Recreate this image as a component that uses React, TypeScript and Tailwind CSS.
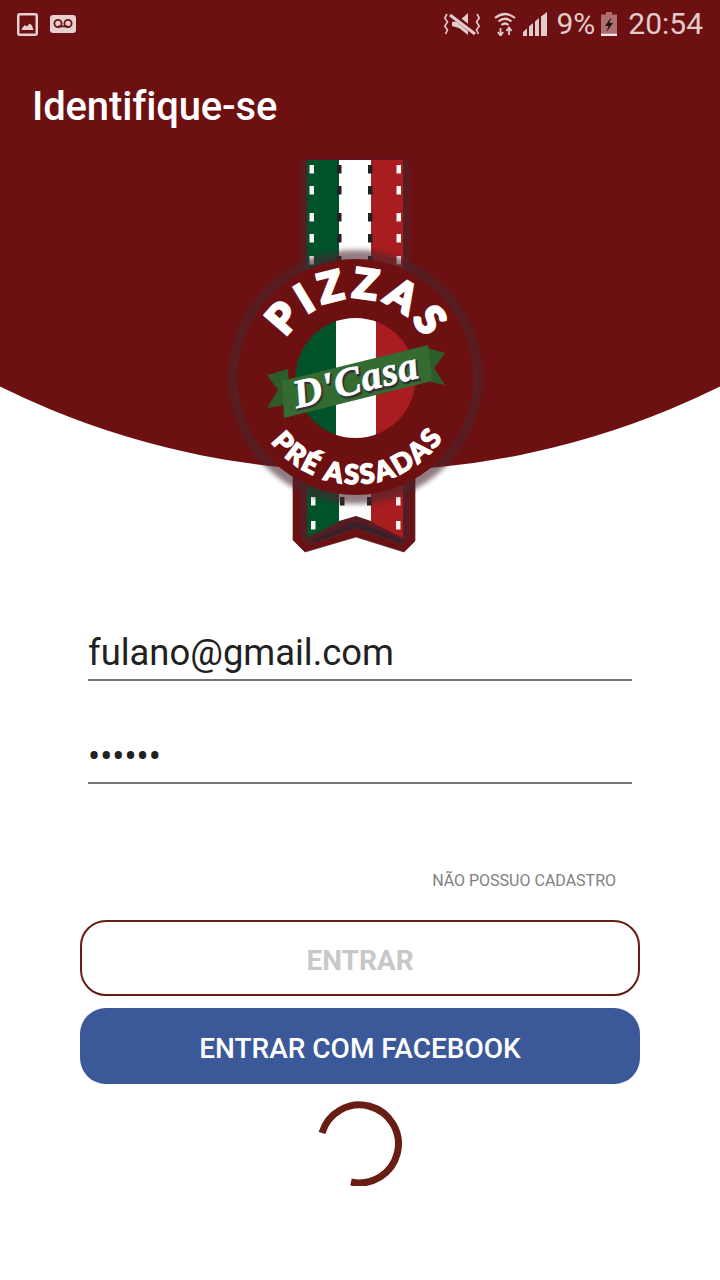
import React from 'react';

const BRAND = '#6d1012';

function LeftStatusIcons() {
  return (
    <div className="flex items-center gap-3">
      <svg width="21" height="23" viewBox="0 0 21 23">
        <rect x="1.25" y="1.25" width="18.5" height="20.5" rx="1.5" fill="#6d1012" stroke="#e6d0d0" strokeWidth="2.5" />
        <path d="M4.5 17 L5.5 14.5 L8 12 L10 13.5 L12.5 10.5 L15 12.5 L16.5 17 Z" fill="#e6d0d0" />
      </svg>
      <svg width="26" height="18" viewBox="0 0 26 18">
        <rect width="26" height="18" rx="3" fill="#e6d0d0" />
        <circle cx="8" cy="8.5" r="3.6" fill="none" stroke={BRAND} strokeWidth="1.8" />
        <circle cx="18" cy="8.5" r="3.6" fill="none" stroke={BRAND} strokeWidth="1.8" />
        <rect x="8" y="10.5" width="10" height="1.8" fill={BRAND} />
      </svg>
    </div>
  );
}

function RightStatusIcons() {
  return (
    <div className="flex items-center text-[30px] leading-none text-[#e2cccc]">
      <svg width="36" height="24" viewBox="0 0 36 24" fill="none">
        <path d="M8 10 L15 9 L24 1 V23 L15 16 L8 14 Z" fill="#e2cccc" />
        <path d="M6 1 L31 21" stroke={BRAND} strokeWidth="5.5" />
        <path d="M6 3 L31 22" stroke="#e2cccc" strokeWidth="3" />
        <path d="M3 2 L0.8 6 L3.5 10 L0.8 14 L3.5 18 L1.5 22" stroke="#e2cccc" strokeWidth="1.6" />
        <path d="M33 2 L35.2 6 L32.5 10 L35.2 14 L32.5 18 L34.5 22" stroke="#e2cccc" strokeWidth="1.6" />
      </svg>
      <svg className="ml-[14px]" width="22" height="24" viewBox="0 0 22 24" fill="none" stroke="#e2cccc" strokeWidth="2.2">
        <path d="M1 6 Q11 -2 21 6" />
        <path d="M4.5 9.5 Q11 4 17.5 9.5" />
        <path d="M7.5 13 Q11 10 14.5 13" />
        <path d="M6.5 16 V23 M3.8 20 L6.5 23.5 L9.2 20" strokeWidth="1.8" />
        <path d="M15 23 V16 M12.3 19 L15 15.5 L17.7 19" strokeWidth="1.8" />
      </svg>
      <svg className="ml-[7px]" width="24" height="24" viewBox="0 0 24 24" fill="#e2cccc">
        <path d="M0 24 V20 L4 16.5 V24 Z" />
        <path d="M6 24 V14.5 L10 11 V24 Z" />
        <path d="M12 24 V9.5 L16 6 V24 Z" />
        <path d="M18 24 V4.5 L24 0 V24 Z" />
      </svg>
      <span className="ml-[9px] font-['Roboto',sans-serif]">9%</span>
      <svg className="ml-[6px]" width="16" height="24" viewBox="0 0 16 24">
        <rect x="5" y="0" width="6" height="3" fill="#ad6e6f" />
        <rect x="0" y="2.5" width="16" height="19" fill="#ad6e6f" />
        <rect x="0" y="21.5" width="16" height="2.5" fill="#f1e4e4" />
        <path d="M10.5 5 L4 14 H7.5 L5.5 20 L12 11 H8.5 Z" fill="#1b1215" />
      </svg>
      <span className="ml-[11px] font-['Roboto',sans-serif]">20:54</span>
    </div>
  );
}

function Stitches({ x, fill, ys }: { x: number; fill: string; ys: number[] }) {
  return (
    <>
      {ys.map((y) => (
        <rect key={y} x={x} y={y} width="4.5" height="8.5" fill={fill} />
      ))}
    </>
  );
}

// drawn in page coordinates: the viewBox starts where the svg sits on the page
function Logo() {
  const ys = [165, 186, 213, 234, 256];
  const low = [497, 521];
  return (
    <svg width="300" height="400" viewBox="210 155 300 400" className="mx-auto block">
      <defs>
        <filter id="glow" x="-30%" y="-30%" width="160%" height="160%">
          <feGaussianBlur stdDeviation="2.5" />
        </filter>
        <path id="topArc" d="M 275.5 378 A 80 80 0 0 1 435.5 378" />
        <path id="bottomArc" d="M 249.5 378 A 106 106 0 0 0 461.5 378" />
        <clipPath id="pizza">
          <circle cx="355.5" cy="378" r="60" />
        </clipPath>
      </defs>

      {/* ribbon top */}
      <rect x="301" y="160" width="108" height="110" fill="#46282d" opacity="0.6" filter="url(#glow)" />
      <rect x="307" y="160" width="32" height="110" fill="#00522b" />
      <rect x="339" y="160" width="32" height="110" fill="#ffffff" />
      <rect x="371" y="160" width="32" height="110" fill="#a91c20" />
      <Stitches x={309.5} fill="#f4f4f4" ys={ys} />
      <Stitches x={337} fill="#1f2024" ys={ys} />
      <Stitches x={368} fill="#1f2024" ys={ys} />
      <Stitches x={396.5} fill="#f4f4f4" ys={ys} />

      {/* ribbon bottom */}
      <path d="M293 465 V540 L305 552 L356 537 L404 552 L415 541 V465 Z" fill={BRAND} />
      <path d="M293 465 V540 L305 552 L356 537 L404 552 L415 541 V465 Z" fill="none" stroke="#46282d" strokeWidth="1" opacity="0.7" />
      <path d="M300 470 V538 L308 546 L356 530 L402 546 L410 538 V470 Z" fill="#4e2229" opacity="0.7" />
      <path d="M307 480 V538 L339 522 H339 V480 Z" fill="#00522b" />
      <path d="M339 480 V521 L356 516 L371 521 V480 Z" fill="#ffffff" />
      <path d="M371 480 V522 L403 538 V480 Z" fill="#a91c20" />
      <path d="M311 540 L356 522 L402 540 L402 543 L356 527 L315 542 Z" fill="#37202a" />
      <Stitches x={311} fill="#f4f4f4" ys={low} />
      <Stitches x={396} fill="#f4f4f4" ys={low} />
      <Stitches x={340} fill="#1f2024" ys={[497]} />
      <Stitches x={367} fill="#1f2024" ys={[497]} />

      {/* badge */}
      <circle cx="355.5" cy="377" r="127" fill="#46282d" opacity="0.6" filter="url(#glow)" />
      <circle cx="355.5" cy="377" r="118" fill={BRAND} />
      <g clipPath="url(#pizza)">
        <rect x="295" y="318" width="41" height="120" fill="#00522b" />
        <rect x="336" y="318" width="40" height="120" fill="#ffffff" />
        <rect x="376" y="318" width="41" height="120" fill="#a91c20" />
      </g>

      <text fontFamily="Lato, sans-serif" fontWeight="900" fontSize="41" fill="#ffffff" stroke="#ffffff" strokeWidth="2.6" letterSpacing="5.5">
        <textPath href="#topArc" startOffset="51%" textAnchor="middle">PIZZAS</textPath>
      </text>
      <text fontFamily="Lato, sans-serif" fontWeight="900" fontSize="27" fill="#ffffff" stroke="#ffffff" strokeWidth="1.4" letterSpacing="2.4">
        <textPath href="#bottomArc" startOffset="51%" textAnchor="middle">PRÉ ASSADAS</textPath>
      </text>

      {/* green banner */}
      <path d="M267 375 L288 369 L290 404 L267 408 L278 390 Z" fill="#2c5c27" />
      <path d="M445 353 L424 347 L426 381 L445 385 L434 368 Z" fill="#2c5c27" />
      <path d="M282 381 L428 345 L432 381 L284 418 Z" fill="#356a30" />
      <g transform="rotate(-14 356 381)">
        <text x="357" y="395" textAnchor="middle" fontFamily="'Liberation Serif', serif" fontStyle="italic" fontWeight="700" fontSize="40" letterSpacing="1" fill="#30343a" stroke="#30343a" strokeWidth="2">D'Casa</text>
        <text x="356" y="393" textAnchor="middle" fontFamily="'Liberation Serif', serif" fontStyle="italic" fontWeight="700" fontSize="40" letterSpacing="1" fill="#ffffff" stroke="#ffffff" strokeWidth="0.8">D'Casa</text>
      </g>
    </svg>
  );
}

export default function App() {
  return (
    <div className="relative w-[720px] h-[1280px] overflow-hidden bg-white font-['Roboto',sans-serif]">
      {/* curved header background */}
      <div className="absolute left-1/2 bottom-[809px] h-[1620px] w-[1620px] -translate-x-1/2 rounded-full bg-[#6d1012]"></div>

      <div className="relative flex flex-col">
        <div className="flex h-[48px] items-center justify-between pl-[17px] pr-[17px]">
          <LeftStatusIcons />
          <RightStatusIcons />
        </div>
        <div className="flex h-[107px] items-start pl-[32px] pt-[33px]">
          <h1 className="text-[40px] leading-[52px] font-medium tracking-[-0.15px] text-white">Identifique-se</h1>
        </div>

        <Logo />

        <div className="mt-[66px] flex flex-col px-[88px]">
          <div className="flex h-[60px] items-center border-b-2 border-[#757575] pt-[7px] text-[36.4px] text-[#212121]">fulano@gmail.com</div>
          <div className="mt-[43px] flex h-[60px] items-center border-b-2 border-[#757575] pt-[7px] text-[36px] text-[#212121]">••••••</div>
        </div>

        <div className="mt-[88px] flex justify-end pr-[104px] text-[16px] leading-[18px] text-[#808080]">NÃO POSSUO CADASTRO</div>

        <div className="mt-[30px] flex flex-col gap-[12px] px-[80px]">
          <button className="h-[76px] rounded-[26px] border-2 border-[#651d14] bg-white pt-[5px] text-[28px] font-bold text-[#c8c8c8]">ENTRAR</button>
          <button className="h-[76px] rounded-[26px] bg-[#3b5998] pt-[5px] text-[28px] font-medium text-white">ENTRAR COM FACEBOOK</button>
        </div>

        <div className="mt-[16px] flex justify-center">
          <svg width="84" height="86" viewBox="0 0 84 86" fill="none">
            <path d="M4 33 A39 39 0 1 1 33 82" stroke="#681e14" strokeWidth="7" />
          </svg>
        </div>
      </div>
    </div>
  );
}
